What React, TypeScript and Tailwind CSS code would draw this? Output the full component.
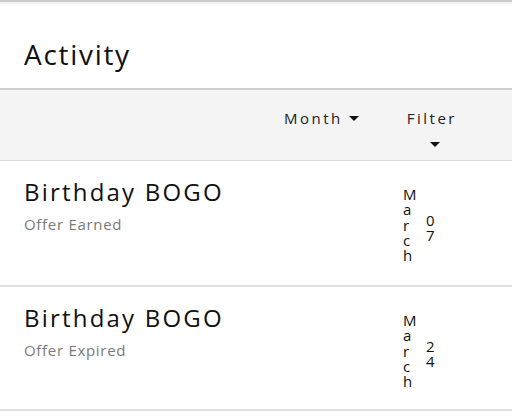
import React from "react";

const font = { fontFamily: '"Open Sans", "Liberation Sans", sans-serif' };

function Caret() {
  return (
    <svg width="10" height="5" viewBox="0 0 10 5" className="inline-block">
      <path d="M0 0 L10 0 L5 5 Z" fill="#111" />
    </svg>
  );
}

function Row({ status, month, day, h }: { status: string; month: string; day: string; h: string }) {
  return (
    <div className={`flex ${h} border-b-2 border-[#dedede] bg-white`}>
      <div className="w-[403px] pl-6 pt-[16px]">
        <div className="text-[24px] leading-[30px] tracking-[2.2px] text-[#111]">Birthday BOGO</div>
        <div className="mt-[8px] text-[15px] leading-[18px] tracking-[0.7px] text-[#7a7a7a]">{status}</div>
      </div>
      <div className="flex items-start pt-[26px] text-[15px] leading-[15.3px] text-[#111]">
        <span className="w-[8px] break-all">{month}</span>
        <span className="ml-[15px] mt-[26px] w-[8px] break-all">{day}</span>
      </div>
    </div>
  );
}

export default function App() {
  return (
    <div className="h-[420px] w-[512px] bg-white" style={font}>
      <div className="h-[2px] bg-[#cbcbcb]" />
      <div className="h-[3px] bg-gradient-to-b from-[#ececec] to-white" />
      <div className="h-[83px] pl-6 pt-[31px] text-[28px] leading-[36px] tracking-[1.7px] text-[#111]">Activity</div>
      <div className="flex h-[73px] border-t-2 border-b border-t-[#cfcfcf] border-b-[#dcdcdc] bg-[#f4f4f4] pt-[18px] text-[15px] leading-[20px] tracking-[2.5px] text-[#222]">
        <div className="ml-[284px] flex items-center gap-[6px] self-start">
          <span>Month</span>
          <Caret />
        </div>
        <div className="ml-[48px] flex w-[54px] flex-col items-start">
          <span>Filter</span>
          <span className="ml-[23px] mt-[12px] leading-[6px]"><Caret /></span>
        </div>
      </div>
      <Row status="Offer Earned" month="March" day="07" h="h-[126px]" />
      <Row status="Offer Expired" month="March" day="24" h="h-[124px]" />
    </div>
  );
}
